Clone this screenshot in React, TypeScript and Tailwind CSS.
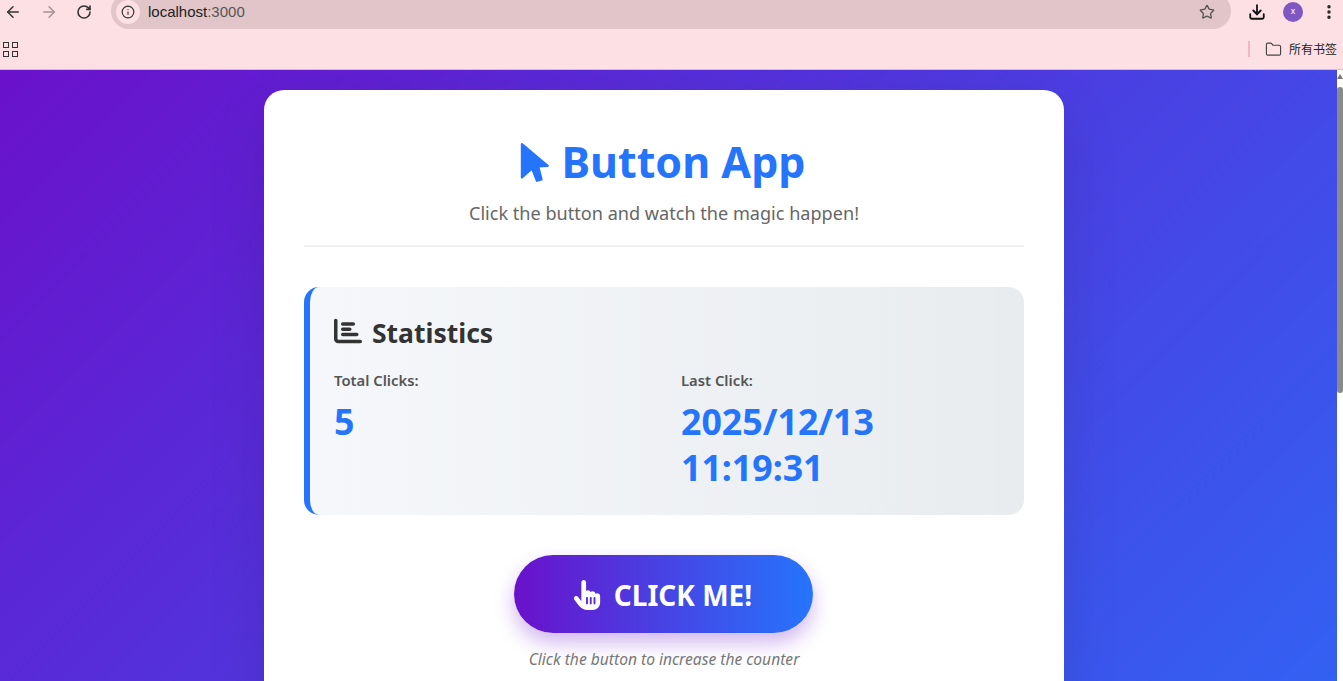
import { ArrowLeft, ArrowRight, RotateCw, Info, Star, Download, MoreVertical, Folder } from "lucide-react"
import { FaChartBar, FaHandPointer } from "react-icons/fa6"

const uiFont = "font-['Noto_Sans','Open_Sans',sans-serif]"

function AppsIcon() {
  return (
    <div className="grid grid-cols-2 gap-[3px]">
      {[0, 1, 2, 3].map((i) => (
        <div key={i} className="w-[6px] h-[6px] border-[1.5px] border-[#333]" />
      ))}
    </div>
  )
}

function PointerIcon() {
  return (
    <svg width="30" height="41" viewBox="60 32 92 124" className="shrink-0">
      <path d="M66 38 L145 104 L116 106 L126 146 L112 150 L97 112 L66 140 Z" fill="#2575fc" stroke="#2575fc" strokeWidth="7" strokeLinejoin="round" />
    </svg>
  )
}

function BrowserBar() {
  return (
    <div className="h-[70px] shrink-0 bg-[#fde0e4] border-b border-[#d9bcc2] font-['Liberation_Sans',sans-serif]">
      <div className="h-[29px] flex items-start">
        <div className="w-[111px] h-[24px] flex items-center pl-[4px] gap-[18px] shrink-0">
          <ArrowLeft size={18} strokeWidth={2} className="text-[#333]" />
          <ArrowRight size={18} strokeWidth={2} className="text-[#a89296]" />
          <RotateCw size={16} strokeWidth={2.4} className="text-[#333]" />
        </div>
        <div className="w-[1120px] h-[36px] mt-[-7px] rounded-full bg-[#e1c5c8] flex items-center pl-[5px] pr-[16px] pt-[2px] shrink-0">
          <div className="w-[24px] h-[24px] rounded-full bg-[#fde0e4] flex items-center justify-center">
            <Info size={14} strokeWidth={2} className="text-[#333]" />
          </div>
          <span className="ml-[8px] text-[15px] text-[#222]">localhost<span className="text-[#555]">:3000</span></span>
          <Star size={16} strokeWidth={2} className="ml-auto text-[#555]" />
        </div>
        <div className="flex-1 h-[24px] flex items-center pl-[17px]">
          <Download size={18} strokeWidth={2.4} className="text-[#111]" />
          <div className="ml-[17px] w-[20px] h-[20px] rounded-full bg-[#7e57c2] flex items-center justify-center text-[9px] text-white">x</div>
          <MoreVertical size={18} strokeWidth={2.6} className="ml-[17px] text-[#222]" />
        </div>
      </div>
      <div className="h-[40px] flex items-center pl-[3px]">
        <AppsIcon />
        <div className="ml-auto w-[2px] h-[16px] bg-[#f8b4c0] mr-[15px]" />
        <Folder size={17} strokeWidth={1.6} className="text-[#444] mr-[7px]" />
        <span className="text-[12px] text-[#222] mr-[6px] font-['Noto_Sans_CJK_SC',sans-serif]">所有书签</span>
      </div>
    </div>
  )
}

export default function App() {
  return (
    <div className="h-[681px] w-full overflow-hidden flex flex-col">
      <BrowserBar />
      <div className="flex-1 min-h-0 flex overflow-hidden">
        <div className="flex-1 min-w-0 overflow-hidden">
          <div className={`h-[1100px] bg-[linear-gradient(135deg,#6a11cb_0%,#2575fc_100%)] pt-[20px] flex justify-center ${uiFont}`}>
            <div className="w-[800px] h-fit ml-[-9px] bg-white rounded-[20px] p-[40px] shadow-[0_20px_60px_rgba(0,0,0,0.1)]">
              <div className="text-center border-b-2 border-[#f0f0f0] h-[117px]">
                <h1 className="flex items-center justify-center gap-[12px] pr-[3px] text-[43px] leading-[64px] font-bold text-[#2575fc]">
                  <PointerIcon />
                  Button App
                </h1>
                <p className="mt-[7px] text-[18.1px] leading-[24px] text-[#666]">Click the button and watch the magic happen!</p>
              </div>

              <div className="mt-[40px] h-[228px] rounded-[15px] border-l-[6px] border-[#2575fc] bg-[linear-gradient(90deg,#f5f7fa_0%,#e9ecef_100%)] pt-[26px] px-[24px]">
                <h2 className="flex items-center gap-[10px] text-[26.5px] leading-[40px] font-bold text-[#333]">
                  <FaChartBar size={28} className="mb-[5px]" />
                  Statistics
                </h2>
                <div className="mt-[17px] grid grid-cols-2 gap-[28px]">
                  <div>
                    <div className="text-[14.8px] leading-[20px] font-semibold text-[#555]">Total Clicks:</div>
                    <div className="mt-[8px] text-[35.7px] leading-[46px] font-bold text-[#2575fc]">5</div>
                  </div>
                  <div>
                    <div className="text-[14.8px] leading-[20px] font-semibold text-[#555]">Last Click:</div>
                    <div className="mt-[8px] w-[240px] text-[35.7px] leading-[46px] font-bold text-[#2575fc]">2025/12/13 11:19:31</div>
                  </div>
                </div>
              </div>

              <div className="mt-[40px] flex flex-col items-center">
                <button className="w-[299px] h-[78px] ml-[-1px] rounded-full bg-[linear-gradient(90deg,#6a11cb_0%,#2575fc_100%)] text-white flex items-center justify-center gap-[12px] text-[28px] font-bold pt-[1px] pr-[3px] shadow-[0_10px_20px_rgba(106,17,203,0.3)]">
                  <FaHandPointer size={30} />
                  CLICK ME!
                </button>
                <p className="mt-[15px] text-[15.6px] leading-[22px] italic text-[#777]">Click the button to increase the counter</p>
              </div>
            </div>
          </div>
        </div>
        <div className="w-[6px] shrink-0 bg-white relative">
          <div className="absolute top-[4px] left-0 w-0 h-0 border-x-[3px] border-x-transparent border-b-[5px] border-b-[#777]" />
          <div className="absolute top-[17px] left-0 w-[6px] h-[306px] rounded-full bg-[#8a8a8a]" />
        </div>
      </div>
    </div>
  )
}
